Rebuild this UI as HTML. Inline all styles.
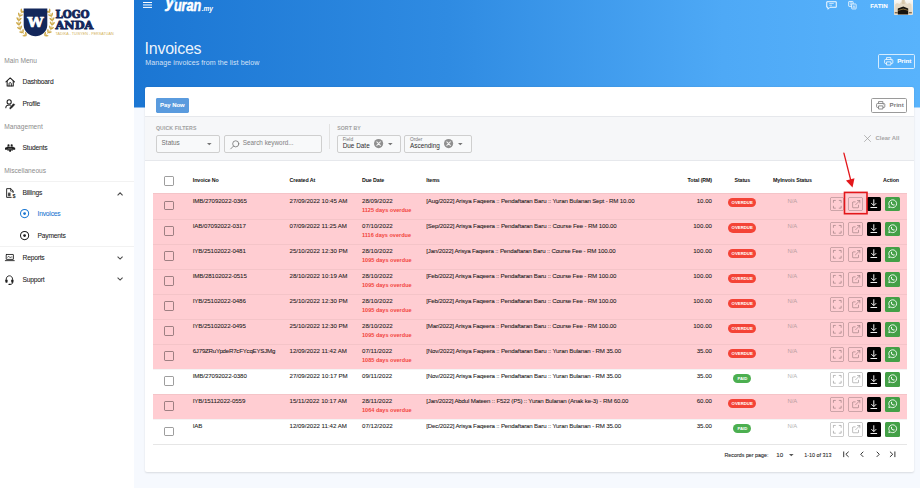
<!DOCTYPE html>
<html lang="en"><head><meta charset="utf-8"><title>Invoices</title>
<style>
html,body{margin:0;padding:0}
body{width:920px;height:488px;overflow:hidden;position:relative;background:#f6f9fe;font-family:"Liberation Sans",sans-serif;}
.t{position:absolute;line-height:1;white-space:nowrap;-webkit-text-stroke:.07px currentColor}
.nb{-webkit-text-stroke:0}
.abs{position:absolute}
#hdr{left:134px;top:0;width:786px;height:107px;background:linear-gradient(90deg,#1b76d3 0%,#2f8be2 40%,#4ea9f6 75%,#58b3fc 100%);}
#side{left:0;top:0;width:134px;height:488px;background:#fff;}
#card{left:145px;top:87px;width:769px;height:385.3px;background:#fff;border-radius:2px;box-shadow:0 0.5px 2px rgba(0,0,0,.12);}
#fbar{left:145px;top:116px;width:769px;height:44.6px;background:#f6f7f9;border-top:.5px solid #e6e8ec;border-bottom:.5px solid #e6e8ec;box-sizing:border-box}
.row{position:absolute;left:152.7px;width:754.1px;height:25px;box-sizing:border-box;border-top:.6px solid rgba(0,0,0,.045)}
.pink{background:#ffcdd2}
.cb{position:absolute;width:9.5px;height:9.5px;box-sizing:border-box;border:1px solid rgba(0,0,0,.38);border-radius:1.4px;background:transparent}
.sel{position:absolute;box-sizing:border-box;border:.8px solid #cfcfcf;border-radius:2px;background:#f8f9fa;height:18.3px;top:135.1px}
.badge{position:absolute;height:9.2px;border-radius:5px;color:#fff;font-weight:bold;font-size:4.3px;line-height:9.4px;text-align:center}
.btn{position:absolute;width:14.4px;height:14.8px;box-sizing:border-box;border-radius:1.5px}
.ob{border:.8px solid rgba(0,0,0,.2)}
svg{position:absolute;overflow:visible}
</style></head><body>

<div id="hdr" class="abs"></div>
<div class="abs" style="left:134px;top:107px;width:786px;height:1px;opacity:.5;background:linear-gradient(90deg,#1b76d3 0%,#2f8be2 40%,#4ea9f6 75%,#58b3fc 100%)"></div>
<div id="side" class="abs"></div>
<div id="card" class="abs"></div>
<div id="fbar" class="abs"></div>
<svg id="logo" style="left:15px;top:6px" width="104" height="34" viewBox="0 0 104 34">
<g fill="none" stroke="#cda94a" stroke-width=".55" stroke-linecap="round">
<path d="M7.8 4.8 C1.6 11 1.6 24 11 29.5"/><path d="M33.2 4.8 C39.4 11 39.4 24 30 29.5"/>
</g>
<g fill="#cda94a"><ellipse cx="6.32" cy="4.42" rx="0.8" ry="2" transform="rotate(0 6.32 4.42)"/><ellipse cx="8.21" cy="5.90" rx="0.8" ry="2" transform="rotate(76 8.21 5.90)"/><ellipse cx="3.93" cy="8.47" rx="0.8" ry="2" transform="rotate(-15 3.93 8.47)"/><ellipse cx="6.14" cy="9.40" rx="0.8" ry="2" transform="rotate(61 6.14 9.40)"/><ellipse cx="2.68" cy="12.99" rx="0.8" ry="2" transform="rotate(-30 2.68 12.99)"/><ellipse cx="5.05" cy="13.33" rx="0.8" ry="2" transform="rotate(46 5.05 13.33)"/><ellipse cx="2.63" cy="17.69" rx="0.8" ry="2" transform="rotate(-45 2.63 17.69)"/><ellipse cx="5.02" cy="17.40" rx="0.8" ry="2" transform="rotate(31 5.02 17.40)"/><ellipse cx="3.81" cy="22.24" rx="0.8" ry="2" transform="rotate(-60 3.81 22.24)"/><ellipse cx="6.04" cy="21.34" rx="0.8" ry="2" transform="rotate(16 6.04 21.34)"/><ellipse cx="6.12" cy="26.33" rx="0.8" ry="2" transform="rotate(-75 6.12 26.33)"/><ellipse cx="8.04" cy="24.89" rx="0.8" ry="2" transform="rotate(1 8.04 24.89)"/><ellipse cx="9.42" cy="29.68" rx="0.8" ry="2" transform="rotate(-90 9.42 29.68)"/><ellipse cx="10.90" cy="27.79" rx="0.8" ry="2" transform="rotate(-14 10.90 27.79)"/><ellipse cx="34.68" cy="4.42" rx="0.8" ry="2" transform="rotate(0 34.68 4.42)"/><ellipse cx="32.79" cy="5.90" rx="0.8" ry="2" transform="rotate(-76 32.79 5.90)"/><ellipse cx="37.07" cy="8.47" rx="0.8" ry="2" transform="rotate(15 37.07 8.47)"/><ellipse cx="34.86" cy="9.40" rx="0.8" ry="2" transform="rotate(-61 34.86 9.40)"/><ellipse cx="38.32" cy="12.99" rx="0.8" ry="2" transform="rotate(30 38.32 12.99)"/><ellipse cx="35.95" cy="13.33" rx="0.8" ry="2" transform="rotate(-46 35.95 13.33)"/><ellipse cx="38.37" cy="17.69" rx="0.8" ry="2" transform="rotate(45 38.37 17.69)"/><ellipse cx="35.98" cy="17.40" rx="0.8" ry="2" transform="rotate(-31 35.98 17.40)"/><ellipse cx="37.19" cy="22.24" rx="0.8" ry="2" transform="rotate(60 37.19 22.24)"/><ellipse cx="34.96" cy="21.34" rx="0.8" ry="2" transform="rotate(-16 34.96 21.34)"/><ellipse cx="34.88" cy="26.33" rx="0.8" ry="2" transform="rotate(75 34.88 26.33)"/><ellipse cx="32.96" cy="24.89" rx="0.8" ry="2" transform="rotate(-1 32.96 24.89)"/><ellipse cx="31.58" cy="29.68" rx="0.8" ry="2" transform="rotate(90 31.58 29.68)"/><ellipse cx="30.10" cy="27.79" rx="0.8" ry="2" transform="rotate(14 30.10 27.79)"/></g>
<path d="M8.7 2.6 H32.3 V19 C32.3 26 26 30.2 20.5 30.2 C15 30.2 8.7 26 8.7 19 Z" fill="#13275b"/>
<text x="20.5" y="21.4" text-anchor="middle" font-family="DejaVu Serif, serif" font-weight="bold" font-size="12.5" fill="#fff" stroke="#fff" stroke-width=".7" textLength="16" lengthAdjust="spacingAndGlyphs">W</text>
<text x="40.6" y="11.5" font-family="DejaVu Serif, serif" font-weight="bold" font-size="10.8" fill="#13275b" stroke="#13275b" stroke-width=".9" textLength="34" lengthAdjust="spacingAndGlyphs">LOGO</text>
<text x="40.6" y="22.5" font-family="DejaVu Serif, serif" font-weight="bold" font-size="10.8" fill="#13275b" stroke="#13275b" stroke-width=".9" textLength="37.6" lengthAdjust="spacingAndGlyphs">ANDA</text>
<text x="40.6" y="28.9" font-family="Liberation Sans, sans-serif" font-size="3.2" fill="#d3b25a" textLength="58" lengthAdjust="spacingAndGlyphs">TADIKA - TUISYEN - PERSATUAN</text>
</svg>
<div class="t" id="s0" style="top:57.87px;font-size:6.6px;color:#8c8c8c;left:4.30px;-webkit-text-stroke:0;">Main Menu</div>
<div class="t" id="s1" style="top:78.82px;font-size:6.7px;color:#1d1d1d;letter-spacing:-0.2px;left:22.50px;">Dashboard</div>
<div class="t" id="s2" style="top:100.62px;font-size:6.7px;color:#1d1d1d;letter-spacing:-0.2px;left:22.50px;">Profile</div>
<div class="t" id="s3" style="top:123.57px;font-size:6.6px;color:#8c8c8c;left:4.30px;-webkit-text-stroke:0;">Management</div>
<div class="t" id="s4" style="top:144.82px;font-size:6.7px;color:#1d1d1d;letter-spacing:-0.2px;left:22.50px;">Students</div>
<div class="t" id="s5" style="top:167.57px;font-size:6.6px;color:#8c8c8c;left:4.30px;-webkit-text-stroke:0;">Miscellaneous</div>
<div class="abs" style="left:0;top:181.2px;width:134px;height:.7px;background:#f2f2f2"></div>
<div class="t" id="s6" style="top:190.12px;font-size:6.7px;color:#1d1d1d;letter-spacing:-0.2px;left:22.50px;">Billings</div>
<div class="t" id="s7" style="top:210.92px;font-size:6.7px;color:#1976d2;letter-spacing:-0.2px;left:37.50px;">Invoices</div>
<div class="t" id="s8" style="top:232.72px;font-size:6.7px;color:#1d1d1d;letter-spacing:-0.2px;left:37.50px;">Payments</div>
<div class="abs" style="left:0;top:245.8px;width:134px;height:.7px;background:#f2f2f2"></div>
<div class="t" id="s9" style="top:254.52px;font-size:6.7px;color:#1d1d1d;letter-spacing:-0.2px;left:22.50px;">Reports</div>
<div class="t" id="s10" style="top:277.12px;font-size:6.7px;color:#1d1d1d;letter-spacing:-0.2px;left:22.50px;">Support</div>
<svg style="left:4.70px;top:77.00px" width="10.4" height="10.2" viewBox="0 0 24 24" ><g fill="none" stroke="#1d1d1d" stroke-width="2.5" stroke-linejoin="round" stroke-linecap="round"><path d="M2 11.5 L12 2.2 L22 11.5"/><path d="M4.8 10 V21.3 H19.2 V10"/><path d="M9.3 21 V15.5 C9.3 12.5 14.7 12.5 14.7 15.5 V21" stroke-width="2.2"/></g></svg>
<svg style="left:4.90px;top:98.60px" width="10" height="10.2" viewBox="0 0 24 24" ><g fill="none" stroke="#1d1d1d" stroke-width="2.5" stroke-linecap="round"><circle cx="10" cy="6.8" r="5"/><path d="M2 21 C2 16 5.5 14.2 10 14.2 C11.2 14.2 12 14.3 13 14.6"/><path d="M12 22.6 L12.6 19.6 L20.6 11.2 L23 13.6 L15 22 Z" stroke-width="2" stroke-linejoin="round" fill="#1d1d1d"/></g></svg>
<svg style="left:4.90px;top:143.90px" width="10.2" height="8" viewBox="0 0 102 80" ><g fill="#1d1d1d"><circle cx="35" cy="13" r="11"/><circle cx="67" cy="13" r="11"/><path d="M22 24 H46 L51 34 L56 24 H80 L92 40 H10 Z"/><rect x="0" y="36" width="102" height="22" rx="3"/><path d="M22 58 H80 V66 H60 V78 H42 V66 H22 Z"/></g><path d="M30 47 H72" stroke="#fff" stroke-width="5" opacity=".55"/></svg>
<svg style="left:5.50px;top:187.80px" width="10" height="10" viewBox="0 0 24 24" ><g fill="none" stroke="#1d1d1d" stroke-width="2.2" stroke-linejoin="round" stroke-linecap="round"><path d="M12.5 22.5 H1.5 V1.5 H11.5 L17 7 V11"/><path d="M11 1.5 V7.5 H17" stroke-width="1.8"/></g><g stroke="#1d1d1d" stroke-width="1.6"><path d="M4.5 12.5 H11 M4.5 15.5 H11 M4.5 18.5 H11 M6.7 11.5 V19.5 M9 11.5 V19.5"/></g><text x="19.4" y="23.5" text-anchor="middle" font-family="Liberation Sans, sans-serif" font-weight="bold" font-size="13" fill="#1d1d1d">$</text></svg>
<svg style="left:19.90px;top:209.40px" width="9.2" height="9.2" viewBox="0 0 18 18" ><circle cx="9" cy="9" r="8" fill="none" stroke="#1976d2" stroke-width="2"/><circle cx="9" cy="9" r="2.7" fill="#1976d2"/></svg>
<svg style="left:19.90px;top:231.20px" width="9.2" height="9.2" viewBox="0 0 18 18" ><circle cx="9" cy="9" r="8" fill="none" stroke="#1d1d1d" stroke-width="2"/><circle cx="9" cy="9" r="2.7" fill="#1d1d1d"/></svg>
<svg style="left:5.40px;top:254.20px" width="9.6" height="7.2" viewBox="0 0 24 18" ><g fill="none" stroke="#1d1d1d" stroke-width="2.2" stroke-linejoin="round" stroke-linecap="round"><rect x="3" y="1.2" width="18" height="12.3" rx="0.6"/><path d="M0.8 16.6 H23.2"/><path d="M6.5 8 L9.5 5.5 L12.5 9.5 L15 7.5 H17.5" stroke-width="1.7"/></g></svg>
<svg style="left:5.40px;top:274.50px" width="8.8" height="10.4" viewBox="0 0 22 26" ><g fill="none" stroke="#1d1d1d" stroke-width="2.3" stroke-linecap="round" stroke-linejoin="round"><path d="M3 15 V11 C3 5.5 6.5 2 11 2 C15.5 2 19 5.5 19 11 V15"/><path d="M19 16 V19 C19 22 17 23.5 13 23.5"/></g><g fill="#1d1d1d"><rect x="1" y="11" width="5.4" height="8.6" rx="2"/><rect x="15.6" y="11" width="5.4" height="8.6" rx="2"/><rect x="8.6" y="21.8" width="5" height="3.4" rx="1.5"/></g></svg>
<svg style="left:117.40px;top:191.70px" width="6.2" height="3.9" viewBox="0 0 11 7" ><path d="M1 6 L5.5 1.4 L10 6" fill="none" stroke="#4a4a4a" stroke-width="1.9"/></svg>
<svg style="left:117.40px;top:255.90px" width="6.2" height="3.9" viewBox="0 0 11 7" ><path d="M1 1 L5.5 5.6 L10 1" fill="none" stroke="#4a4a4a" stroke-width="1.9"/></svg>
<svg style="left:117.40px;top:277.20px" width="6.2" height="3.9" viewBox="0 0 11 7" ><path d="M1 1 L5.5 5.6 L10 1" fill="none" stroke="#4a4a4a" stroke-width="1.9"/></svg>
<svg style="left:826.00px;top:1.00px" width="11" height="9" viewBox="0 0 22 18" ><g fill="none" stroke="#fff" stroke-width="1.9" stroke-linejoin="round"><path d="M1.5 1.5 H20.5 V12.5 H8 L4 16.5 V12.5 H1.5 Z"/></g><path d="M6.5 5 H15.5 M6.5 8.5 H12" stroke="#fff" stroke-width="1.5" opacity=".8"/></svg>
<svg style="left:848.10px;top:0.70px" width="8.8" height="8.4" viewBox="0 0 18 18" ><g fill="none" stroke="#fff" stroke-width="1.7" stroke-linejoin="round"><rect x="1" y="1" width="9.5" height="10.5" rx="1"/><rect x="7.5" y="6.5" width="9.5" height="10.5" rx="1" fill="#50acf8"/></g><path d="M3.5 4 H8 M5.8 3 V4 M4 8.5 C6 7.5 7 6 7.3 4 M4.2 5.5 C5 7 6 8 7.8 8.6" stroke="#fff" stroke-width="1" fill="none"/><path d="M10 15 L12.3 9.5 L14.6 15 M10.8 13.3 H13.8" stroke="#fff" stroke-width="1.1" fill="none"/></svg>
<svg style="left:883.80px;top:57.20px" width="9.4" height="8.6" viewBox="0 0 24 22" ><g fill="none" stroke="#fff" stroke-width="2" stroke-linejoin="round"><path d="M6.5 6 V1.5 H17.5 V6"/><path d="M6 16.5 H3.5 C2.3 16.5 1.5 15.7 1.5 14.5 V8.5 C1.5 7.3 2.3 6.5 3.5 6.5 H20.5 C21.7 6.5 22.5 7.3 22.5 8.5 V14.5 C22.5 15.7 21.7 16.5 20.5 16.5 H18"/><path d="M6.5 12.5 H17.5 V20.5 H6.5 Z"/></g><circle cx="18.6" cy="9.6" r="1.1" fill="#fff"/></svg>
<svg style="left:876.20px;top:101.40px" width="9.4" height="8.6" viewBox="0 0 24 22" ><g fill="none" stroke="#707070" stroke-width="2" stroke-linejoin="round"><path d="M6.5 6 V1.5 H17.5 V6"/><path d="M6 16.5 H3.5 C2.3 16.5 1.5 15.7 1.5 14.5 V8.5 C1.5 7.3 2.3 6.5 3.5 6.5 H20.5 C21.7 6.5 22.5 7.3 22.5 8.5 V14.5 C22.5 15.7 21.7 16.5 20.5 16.5 H18"/><path d="M6.5 12.5 H17.5 V20.5 H6.5 Z"/></g><circle cx="18.6" cy="9.6" r="1.1" fill="#707070"/></svg>
<div class="abs" style="left:143px;top:2px;width:8.8px;height:1.1px;background:#fff;box-shadow:0 2.45px 0 #fff,0 4.9px 0 #fff"></div>
<svg id="yuran" style="left:160px;top:0" width="60" height="14" viewBox="0 0 60 14"><text font-family="Liberation Sans, sans-serif" font-weight="bold" font-style="italic" font-size="16.6" fill="#fff" stroke="#fff" stroke-width=".55"><tspan x="5.6" y="7.6" textLength="8.6" lengthAdjust="spacingAndGlyphs">y</tspan><tspan x="13.9" y="10.9" textLength="27.4" lengthAdjust="spacingAndGlyphs">uran</tspan></text><text x="41.7" y="10.7" font-family="Liberation Sans, sans-serif" font-style="italic" font-weight="bold" font-size="7" fill="#fff" textLength="11.2" lengthAdjust="spacingAndGlyphs">.my</text><path d="M12.8 0 H16.2 V1.2 C16.2 1.9 15.6 2.3 15 2.1 L12.8 1.4 Z" fill="#63c3ff"/></svg>
<div class="t" id="h1" style="top:40.68px;font-size:16px;color:rgba(255,255,255,.93);letter-spacing:-0.25px;left:144.60px;-webkit-text-stroke:0;">Invoices</div>
<div class="t" id="h2" style="top:60.21px;font-size:7.1px;color:rgba(255,255,255,.8);letter-spacing:0.05px;left:145.30px;-webkit-text-stroke:0;">Manage invoices from the list below</div>
<div class="t" id="fatin" style="top:3.28px;font-size:6.2px;color:#fff;font-weight:bold;left:870.20px;">FATIN</div>
<div class="abs" id="avatar" style="left:894.2px;top:-2px;width:18.7px;height:16.6px;border-radius:1.6px;overflow:hidden;background:#fbfaf8">
<svg style="left:0;top:0" width="18.7" height="16.6" viewBox="0 0 18.7 16.6">
<defs><linearGradient id="avg" x1="0" y1="0" x2="0" y2="1"><stop offset="0" stop-color="#ffffff"/><stop offset=".45" stop-color="#f1ebe0"/><stop offset="1" stop-color="#e3d6c0"/></linearGradient></defs>
<rect width="18.7" height="16.6" fill="url(#avg)"/>
<path d="M1.2 16.6 V6.4 L3 5 L5.6 6 L7.4 3.4 L8.2 0 H10.4 L11.2 3.4 L13 6 L15.6 5 L17.4 6.4 V16.6 Z" fill="#e6dac6"/>
<path d="M8.4 0 H10.2 L10.8 6 H7.8 Z" fill="#d9c8ab"/>
<path d="M3.8 16.6 V10.6 L9.3 8.4 L14.2 10.6 V16.6 Z" fill="#17130e"/>
<path d="M4.2 12 L9.3 10.6 L14 12 V12.8 L9.3 11.5 L4.2 12.8 Z" fill="#8f7440"/>
<rect x="0.8" y="14" width="3" height="1.4" fill="#6a5238" opacity=".8"/><rect x="14.8" y="14" width="3" height="1.4" fill="#6a5238" opacity=".8"/>
</svg></div>
<div class="abs" id="hprint" style="left:878.4px;top:54.2px;width:36.2px;height:14.6px;box-sizing:border-box;border:.8px solid rgba(255,255,255,.75);border-radius:1.6px"></div>
<div class="t" id="hprintt" style="top:58.38px;font-size:6.2px;color:#fff;font-weight:bold;left:897.20px;">Print</div>
<div class="abs" id="paynow" style="left:156px;top:98.4px;width:32.8px;height:14.6px;background:#5a9bde;border-radius:1.4px"></div>
<div class="t" id="paynowt" style="top:103.23px;font-size:5.9px;color:#fff;font-weight:bold;left:72.40px;width:200px;text-align:center;">Pay Now</div>
<div class="abs" id="cprint" style="left:871px;top:98.4px;width:36px;height:14.6px;box-sizing:border-box;border:.8px solid #9a9a9a;border-radius:1.6px"></div>
<div class="t" id="cprintt" style="top:102.38px;font-size:6.2px;color:#7a7a7a;font-weight:bold;left:889.60px;-webkit-text-stroke:0;">Print</div>
<div class="t" id="qf" style="top:126.10px;font-size:5.2px;color:#a0a0a0;font-weight:bold;letter-spacing:0.08px;left:156.00px;-webkit-text-stroke:0;">QUICK FILTERS</div>
<div class="sel" style="left:156px;width:64.2px"></div>
<div class="t" id="status" style="top:140.27px;font-size:6.4px;color:#707070;left:161.60px;-webkit-text-stroke:0;">Status</div>
<div class="sel" style="left:223.6px;width:98.8px"></div>
<div class="t" id="search" style="top:140.10px;font-size:6.35px;color:#808080;left:242.80px;-webkit-text-stroke:0;">Search keyword...</div>
<div class="abs" style="left:329.1px;top:124.4px;width:.6px;height:25px;background:#e2e2e2"></div>
<div class="t" id="sortby" style="top:126.10px;font-size:5.2px;color:#a0a0a0;font-weight:bold;letter-spacing:0.08px;left:337.20px;-webkit-text-stroke:0;">SORT BY</div>
<div class="sel" style="left:337.2px;width:63.4px"></div>
<div class="t" id="field" style="top:137.50px;font-size:4.8px;color:#777;left:342.70px;-webkit-text-stroke:0;">Field</div>
<div class="t" id="duedate" style="top:143.47px;font-size:6.4px;color:#2e2e2e;left:342.70px;-webkit-text-stroke:0;">Due Date</div>
<div class="sel" style="left:404.3px;width:67.6px"></div>
<div class="t" id="order" style="top:137.50px;font-size:4.8px;color:#777;left:410.00px;-webkit-text-stroke:0;">Order</div>
<div class="t" id="asc" style="top:143.47px;font-size:6.4px;color:#2e2e2e;left:410.00px;-webkit-text-stroke:0;">Ascending</div>
<div class="t" id="clearall" style="top:136.13px;font-size:5.9px;color:#a6a6a6;font-weight:bold;left:875.60px;-webkit-text-stroke:0;">Clear All</div>
<svg style="left:207.00px;top:143.40px" width="4.6" height="2.4" viewBox="0 0 10 5" ><path d="M0 0 H10 L5 5 Z" fill="#757575"/></svg>
<svg style="left:230.20px;top:139.60px" width="9.6" height="9.6" viewBox="0 0 20 20" ><g fill="none" stroke="#757575" stroke-width="1.7" stroke-linecap="round"><circle cx="12" cy="8" r="6.4"/><path d="M7.3 12.7 L1.5 18.5"/></g></svg>
<svg style="left:373.75px;top:139.40px" width="9.2" height="9.2" viewBox="0 0 20 20" ><circle cx="10" cy="10" r="10" fill="#8f8f8f"/><path d="M6.2 6.2 L13.8 13.8 M13.8 6.2 L6.2 13.8" stroke="#f4f4f4" stroke-width="2.2" stroke-linecap="round"/></svg>
<svg style="left:388.00px;top:143.40px" width="4.6" height="2.4" viewBox="0 0 10 5" ><path d="M0 0 H10 L5 5 Z" fill="#757575"/></svg>
<svg style="left:444.10px;top:139.40px" width="9.2" height="9.2" viewBox="0 0 20 20" ><circle cx="10" cy="10" r="10" fill="#8f8f8f"/><path d="M6.2 6.2 L13.8 13.8 M13.8 6.2 L6.2 13.8" stroke="#f4f4f4" stroke-width="2.2" stroke-linecap="round"/></svg>
<svg style="left:458.40px;top:143.40px" width="4.6" height="2.4" viewBox="0 0 10 5" ><path d="M0 0 H10 L5 5 Z" fill="#757575"/></svg>
<svg style="left:863.80px;top:135.00px" width="7" height="7" viewBox="0 0 14 14" ><path d="M1 1 L13 13 M13 1 L1 13" stroke="#9a9a9a" stroke-width="1.4" stroke-linecap="round"/></svg>
<div class="cb" style="left:164.1px;top:176.2px"></div>
<div class="t" id="th1" style="top:177.84px;font-size:5.3px;color:#111;font-weight:bold;letter-spacing:-0.1px;left:192.80px;-webkit-text-stroke:0;">Invoice No</div>
<div class="t" id="th2" style="top:177.84px;font-size:5.3px;color:#111;font-weight:bold;letter-spacing:-0.1px;left:289.50px;-webkit-text-stroke:0;">Created At</div>
<div class="t" id="th3" style="top:177.84px;font-size:5.3px;color:#111;font-weight:bold;letter-spacing:-0.1px;left:362.00px;-webkit-text-stroke:0;">Due Date</div>
<div class="t" id="th4" style="top:177.84px;font-size:5.3px;color:#111;font-weight:bold;letter-spacing:-0.1px;left:426.30px;-webkit-text-stroke:0;">Items</div>
<div class="t" id="th5" style="top:177.84px;font-size:5.3px;color:#111;font-weight:bold;letter-spacing:-0.1px;right:208.00px;-webkit-text-stroke:0;">Total (RM)</div>
<div class="t" id="th6" style="top:177.84px;font-size:5.3px;color:#111;font-weight:bold;letter-spacing:-0.1px;left:642.30px;width:200px;text-align:center;-webkit-text-stroke:0;">Status</div>
<div class="t" id="th7" style="top:177.84px;font-size:5.3px;color:#111;font-weight:bold;letter-spacing:-0.1px;left:692.40px;width:200px;text-align:center;-webkit-text-stroke:0;">MyInvois Status</div>
<div class="t" id="th8" style="top:177.84px;font-size:5.3px;color:#111;font-weight:bold;letter-spacing:-0.1px;right:21.00px;-webkit-text-stroke:0;">Action</div>
<div class="row pink" style="top:193px;height:26px"></div>
<div class="cb" style="left:164.1px;top:200.9px"></div>
<div class="t" id="r0a" style="top:198.00px;font-size:6.15px;color:#1a1a1a;letter-spacing:-0.094px;left:192.70px;">IMB/27092022-0365</div>
<div class="t" id="r0b" style="top:198.00px;font-size:6.15px;color:#1a1a1a;letter-spacing:-0.03px;left:289.50px;">27/09/2022 10:45 AM</div>
<div class="t" id="r0c" style="top:198.00px;font-size:6.15px;color:#1a1a1a;left:362.00px;">28/09/2022</div>
<div class="t" id="r0d" style="top:207.51px;font-size:5.55px;color:#f2453d;font-weight:bold;left:362.00px;-webkit-text-stroke:0;">1125 days overdue</div>
<div class="t" id="r0e" style="top:198.00px;font-size:6.15px;color:#1a1a1a;letter-spacing:-0.165px;left:426.20px;">[Aug/2022] Arisya Faqeera :: Pendaftaran Baru :: Yuran Bulanan Sept - RM 10.00</div>
<div class="t" id="r0f" style="top:198.00px;font-size:6.15px;color:#1a1a1a;right:208.00px;">10.00</div>
<div class="badge" style="left:728.2px;top:198.3px;width:28px;background:#f44336">OVERDUE</div>
<div class="t" id="r0g" style="top:198.73px;font-size:5.9px;color:#b99da1;left:692.30px;width:200px;text-align:center;-webkit-text-stroke:0;">N/A</div>
<div class="btn ob" style="left:830px;top:196.6px"></div>
<div class="btn ob" style="left:848.4px;top:196.6px"></div>
<div class="btn" style="left:866.8px;top:196.6px;background:#000"></div>
<div class="btn" style="left:885.2px;top:196.6px;background:#43a047"></div>
<svg style="left:833.20px;top:199.75px" width="8.6" height="8.6" viewBox="0 0 20 20" ><path d="M1 6.5 V1 H6.5 M13.5 1 H19 V6.5 M19 13.5 V19 H13.5 M6.5 19 H1 V13.5" fill="none" stroke="rgba(0,0,0,.36)" stroke-width="1.7"/></svg>
<svg style="left:851.70px;top:199.75px" width="8.4" height="8.4" viewBox="0 0 20 20" ><g fill="none" stroke="rgba(0,0,0,.36)" stroke-width="1.7" stroke-linejoin="round"><path d="M15.5 11.5 V17 C15.5 18 15 18.5 14 18.5 H3 C2 18.5 1.5 18 1.5 17 V6 C1.5 5 2 4.5 3 4.5 H8.5"/><path d="M8 12 L18.5 1.5 M12 1.3 H18.7 V8"/></g></svg>
<svg style="left:870.20px;top:199.15px" width="7.6" height="9.6" viewBox="0 0 16 20" ><path d="M8 0.5 V13.5 M2.8 8.6 L8 13.8 L13.2 8.6" fill="none" stroke="#fff" stroke-width="2"/><path d="M1 17.8 H15" stroke="#fff" stroke-width="2"/></svg>
<svg style="left:887.80px;top:198.85px" width="9.4" height="9.4" viewBox="0 0 24 24" ><path d="M12 2 C6.5 2 2 6.5 2 12 C2 13.9 2.5 15.6 3.4 17.1 L2 22 L7.1 20.7 C8.5 21.5 10.2 22 12 22 C17.5 22 22 17.5 22 12 C22 6.5 17.5 2 12 2 Z" fill="none" stroke="#fff" stroke-width="2.2" stroke-linejoin="round"/><path d="M8.3 6.9 C7.6 7.4 7.2 8.3 7.3 9.3 C7.6 12.6 11.3 16.4 14.8 16.8 C15.8 16.9 16.7 16.4 17.2 15.6 L17.3 14.6 L14.8 13.3 L13.7 14.4 C12.2 13.8 10.4 12 9.7 10.4 L10.8 9.2 L9.5 6.8 Z" fill="#fff"/></svg>
<div class="row pink" style="top:219px;height:25px"></div>
<div class="cb" style="left:164.1px;top:226.0px"></div>
<div class="t" id="r1a" style="top:223.00px;font-size:6.15px;color:#1a1a1a;letter-spacing:-0.094px;left:192.70px;">IAB/07092022-0317</div>
<div class="t" id="r1b" style="top:223.00px;font-size:6.15px;color:#1a1a1a;letter-spacing:-0.03px;left:289.50px;">07/09/2022 11:25 AM</div>
<div class="t" id="r1c" style="top:223.00px;font-size:6.15px;color:#1a1a1a;left:362.00px;">07/10/2022</div>
<div class="t" id="r1d" style="top:232.51px;font-size:5.55px;color:#f2453d;font-weight:bold;left:362.00px;-webkit-text-stroke:0;">1116 days overdue</div>
<div class="t" id="r1e" style="top:223.00px;font-size:6.15px;color:#1a1a1a;letter-spacing:-0.165px;left:426.20px;">[Sep/2022] Arisya Faqeera :: Pendaftaran Baru :: Course Fee - RM 100.00</div>
<div class="t" id="r1f" style="top:223.00px;font-size:6.15px;color:#1a1a1a;right:208.00px;">100.00</div>
<div class="badge" style="left:728.2px;top:223.4px;width:28px;background:#f44336">OVERDUE</div>
<div class="t" id="r1g" style="top:223.73px;font-size:5.9px;color:#b99da1;left:692.30px;width:200px;text-align:center;-webkit-text-stroke:0;">N/A</div>
<div class="btn ob" style="left:830px;top:221.7px"></div>
<div class="btn ob" style="left:848.4px;top:221.7px"></div>
<div class="btn" style="left:866.8px;top:221.7px;background:#000"></div>
<div class="btn" style="left:885.2px;top:221.7px;background:#43a047"></div>
<svg style="left:833.20px;top:224.81px" width="8.6" height="8.6" viewBox="0 0 20 20" ><path d="M1 6.5 V1 H6.5 M13.5 1 H19 V6.5 M19 13.5 V19 H13.5 M6.5 19 H1 V13.5" fill="none" stroke="rgba(0,0,0,.36)" stroke-width="1.7"/></svg>
<svg style="left:851.70px;top:224.81px" width="8.4" height="8.4" viewBox="0 0 20 20" ><g fill="none" stroke="rgba(0,0,0,.36)" stroke-width="1.7" stroke-linejoin="round"><path d="M15.5 11.5 V17 C15.5 18 15 18.5 14 18.5 H3 C2 18.5 1.5 18 1.5 17 V6 C1.5 5 2 4.5 3 4.5 H8.5"/><path d="M8 12 L18.5 1.5 M12 1.3 H18.7 V8"/></g></svg>
<svg style="left:870.20px;top:224.21px" width="7.6" height="9.6" viewBox="0 0 16 20" ><path d="M8 0.5 V13.5 M2.8 8.6 L8 13.8 L13.2 8.6" fill="none" stroke="#fff" stroke-width="2"/><path d="M1 17.8 H15" stroke="#fff" stroke-width="2"/></svg>
<svg style="left:887.80px;top:223.91px" width="9.4" height="9.4" viewBox="0 0 24 24" ><path d="M12 2 C6.5 2 2 6.5 2 12 C2 13.9 2.5 15.6 3.4 17.1 L2 22 L7.1 20.7 C8.5 21.5 10.2 22 12 22 C17.5 22 22 17.5 22 12 C22 6.5 17.5 2 12 2 Z" fill="none" stroke="#fff" stroke-width="2.2" stroke-linejoin="round"/><path d="M8.3 6.9 C7.6 7.4 7.2 8.3 7.3 9.3 C7.6 12.6 11.3 16.4 14.8 16.8 C15.8 16.9 16.7 16.4 17.2 15.6 L17.3 14.6 L14.8 13.3 L13.7 14.4 C12.2 13.8 10.4 12 9.7 10.4 L10.8 9.2 L9.5 6.8 Z" fill="#fff"/></svg>
<div class="row pink" style="top:244px;height:25px"></div>
<div class="cb" style="left:164.1px;top:251.1px"></div>
<div class="t" id="r2a" style="top:248.00px;font-size:6.15px;color:#1a1a1a;letter-spacing:-0.094px;left:192.70px;">IYB/25102022-0481</div>
<div class="t" id="r2b" style="top:248.00px;font-size:6.15px;color:#1a1a1a;letter-spacing:-0.03px;left:289.50px;">25/10/2022 12:30 PM</div>
<div class="t" id="r2c" style="top:248.00px;font-size:6.15px;color:#1a1a1a;left:362.00px;">28/10/2022</div>
<div class="t" id="r2d" style="top:257.51px;font-size:5.55px;color:#f2453d;font-weight:bold;left:362.00px;-webkit-text-stroke:0;">1095 days overdue</div>
<div class="t" id="r2e" style="top:248.00px;font-size:6.15px;color:#1a1a1a;letter-spacing:-0.165px;left:426.20px;">[Jan/2022] Arisya Faqeera :: Pendaftaran Baru :: Course Fee - RM 100.00</div>
<div class="t" id="r2f" style="top:248.00px;font-size:6.15px;color:#1a1a1a;right:208.00px;">100.00</div>
<div class="badge" style="left:728.2px;top:248.5px;width:28px;background:#f44336">OVERDUE</div>
<div class="t" id="r2g" style="top:248.73px;font-size:5.9px;color:#b99da1;left:692.30px;width:200px;text-align:center;-webkit-text-stroke:0;">N/A</div>
<div class="btn ob" style="left:830px;top:246.8px"></div>
<div class="btn ob" style="left:848.4px;top:246.8px"></div>
<div class="btn" style="left:866.8px;top:246.8px;background:#000"></div>
<div class="btn" style="left:885.2px;top:246.8px;background:#43a047"></div>
<svg style="left:833.20px;top:249.87px" width="8.6" height="8.6" viewBox="0 0 20 20" ><path d="M1 6.5 V1 H6.5 M13.5 1 H19 V6.5 M19 13.5 V19 H13.5 M6.5 19 H1 V13.5" fill="none" stroke="rgba(0,0,0,.36)" stroke-width="1.7"/></svg>
<svg style="left:851.70px;top:249.87px" width="8.4" height="8.4" viewBox="0 0 20 20" ><g fill="none" stroke="rgba(0,0,0,.36)" stroke-width="1.7" stroke-linejoin="round"><path d="M15.5 11.5 V17 C15.5 18 15 18.5 14 18.5 H3 C2 18.5 1.5 18 1.5 17 V6 C1.5 5 2 4.5 3 4.5 H8.5"/><path d="M8 12 L18.5 1.5 M12 1.3 H18.7 V8"/></g></svg>
<svg style="left:870.20px;top:249.27px" width="7.6" height="9.6" viewBox="0 0 16 20" ><path d="M8 0.5 V13.5 M2.8 8.6 L8 13.8 L13.2 8.6" fill="none" stroke="#fff" stroke-width="2"/><path d="M1 17.8 H15" stroke="#fff" stroke-width="2"/></svg>
<svg style="left:887.80px;top:248.97px" width="9.4" height="9.4" viewBox="0 0 24 24" ><path d="M12 2 C6.5 2 2 6.5 2 12 C2 13.9 2.5 15.6 3.4 17.1 L2 22 L7.1 20.7 C8.5 21.5 10.2 22 12 22 C17.5 22 22 17.5 22 12 C22 6.5 17.5 2 12 2 Z" fill="none" stroke="#fff" stroke-width="2.2" stroke-linejoin="round"/><path d="M8.3 6.9 C7.6 7.4 7.2 8.3 7.3 9.3 C7.6 12.6 11.3 16.4 14.8 16.8 C15.8 16.9 16.7 16.4 17.2 15.6 L17.3 14.6 L14.8 13.3 L13.7 14.4 C12.2 13.8 10.4 12 9.7 10.4 L10.8 9.2 L9.5 6.8 Z" fill="#fff"/></svg>
<div class="row pink" style="top:269px;height:25px"></div>
<div class="cb" style="left:164.1px;top:276.1px"></div>
<div class="t" id="r3a" style="top:273.00px;font-size:6.15px;color:#1a1a1a;letter-spacing:-0.094px;left:192.70px;">IMB/28102022-0515</div>
<div class="t" id="r3b" style="top:273.00px;font-size:6.15px;color:#1a1a1a;letter-spacing:-0.03px;left:289.50px;">28/10/2022 10:19 AM</div>
<div class="t" id="r3c" style="top:273.00px;font-size:6.15px;color:#1a1a1a;left:362.00px;">28/10/2022</div>
<div class="t" id="r3d" style="top:282.51px;font-size:5.55px;color:#f2453d;font-weight:bold;left:362.00px;-webkit-text-stroke:0;">1095 days overdue</div>
<div class="t" id="r3e" style="top:273.00px;font-size:6.15px;color:#1a1a1a;letter-spacing:-0.165px;left:426.20px;">[Feb/2022] Arisya Faqeera :: Pendaftaran Baru :: Course Fee - RM 100.00</div>
<div class="t" id="r3f" style="top:273.00px;font-size:6.15px;color:#1a1a1a;right:208.00px;">100.00</div>
<div class="badge" style="left:728.2px;top:273.5px;width:28px;background:#f44336">OVERDUE</div>
<div class="t" id="r3g" style="top:273.73px;font-size:5.9px;color:#b99da1;left:692.30px;width:200px;text-align:center;-webkit-text-stroke:0;">N/A</div>
<div class="btn ob" style="left:830px;top:271.8px"></div>
<div class="btn ob" style="left:848.4px;top:271.8px"></div>
<div class="btn" style="left:866.8px;top:271.8px;background:#000"></div>
<div class="btn" style="left:885.2px;top:271.8px;background:#43a047"></div>
<svg style="left:833.20px;top:274.93px" width="8.6" height="8.6" viewBox="0 0 20 20" ><path d="M1 6.5 V1 H6.5 M13.5 1 H19 V6.5 M19 13.5 V19 H13.5 M6.5 19 H1 V13.5" fill="none" stroke="rgba(0,0,0,.36)" stroke-width="1.7"/></svg>
<svg style="left:851.70px;top:274.93px" width="8.4" height="8.4" viewBox="0 0 20 20" ><g fill="none" stroke="rgba(0,0,0,.36)" stroke-width="1.7" stroke-linejoin="round"><path d="M15.5 11.5 V17 C15.5 18 15 18.5 14 18.5 H3 C2 18.5 1.5 18 1.5 17 V6 C1.5 5 2 4.5 3 4.5 H8.5"/><path d="M8 12 L18.5 1.5 M12 1.3 H18.7 V8"/></g></svg>
<svg style="left:870.20px;top:274.33px" width="7.6" height="9.6" viewBox="0 0 16 20" ><path d="M8 0.5 V13.5 M2.8 8.6 L8 13.8 L13.2 8.6" fill="none" stroke="#fff" stroke-width="2"/><path d="M1 17.8 H15" stroke="#fff" stroke-width="2"/></svg>
<svg style="left:887.80px;top:274.03px" width="9.4" height="9.4" viewBox="0 0 24 24" ><path d="M12 2 C6.5 2 2 6.5 2 12 C2 13.9 2.5 15.6 3.4 17.1 L2 22 L7.1 20.7 C8.5 21.5 10.2 22 12 22 C17.5 22 22 17.5 22 12 C22 6.5 17.5 2 12 2 Z" fill="none" stroke="#fff" stroke-width="2.2" stroke-linejoin="round"/><path d="M8.3 6.9 C7.6 7.4 7.2 8.3 7.3 9.3 C7.6 12.6 11.3 16.4 14.8 16.8 C15.8 16.9 16.7 16.4 17.2 15.6 L17.3 14.6 L14.8 13.3 L13.7 14.4 C12.2 13.8 10.4 12 9.7 10.4 L10.8 9.2 L9.5 6.8 Z" fill="#fff"/></svg>
<div class="row pink" style="top:294px;height:25px"></div>
<div class="cb" style="left:164.1px;top:301.2px"></div>
<div class="t" id="r4a" style="top:298.00px;font-size:6.15px;color:#1a1a1a;letter-spacing:-0.094px;left:192.70px;">IYB/25102022-0486</div>
<div class="t" id="r4b" style="top:298.00px;font-size:6.15px;color:#1a1a1a;letter-spacing:-0.03px;left:289.50px;">25/10/2022 12:30 PM</div>
<div class="t" id="r4c" style="top:298.00px;font-size:6.15px;color:#1a1a1a;left:362.00px;">28/10/2022</div>
<div class="t" id="r4d" style="top:307.51px;font-size:5.55px;color:#f2453d;font-weight:bold;left:362.00px;-webkit-text-stroke:0;">1095 days overdue</div>
<div class="t" id="r4e" style="top:298.00px;font-size:6.15px;color:#1a1a1a;letter-spacing:-0.165px;left:426.20px;">[Feb/2022] Arisya Faqeera :: Pendaftaran Baru :: Course Fee - RM 100.00</div>
<div class="t" id="r4f" style="top:298.00px;font-size:6.15px;color:#1a1a1a;right:208.00px;">100.00</div>
<div class="badge" style="left:728.2px;top:298.6px;width:28px;background:#f44336">OVERDUE</div>
<div class="t" id="r4g" style="top:298.73px;font-size:5.9px;color:#b99da1;left:692.30px;width:200px;text-align:center;-webkit-text-stroke:0;">N/A</div>
<div class="btn ob" style="left:830px;top:296.9px"></div>
<div class="btn ob" style="left:848.4px;top:296.9px"></div>
<div class="btn" style="left:866.8px;top:296.9px;background:#000"></div>
<div class="btn" style="left:885.2px;top:296.9px;background:#43a047"></div>
<svg style="left:833.20px;top:299.99px" width="8.6" height="8.6" viewBox="0 0 20 20" ><path d="M1 6.5 V1 H6.5 M13.5 1 H19 V6.5 M19 13.5 V19 H13.5 M6.5 19 H1 V13.5" fill="none" stroke="rgba(0,0,0,.36)" stroke-width="1.7"/></svg>
<svg style="left:851.70px;top:299.99px" width="8.4" height="8.4" viewBox="0 0 20 20" ><g fill="none" stroke="rgba(0,0,0,.36)" stroke-width="1.7" stroke-linejoin="round"><path d="M15.5 11.5 V17 C15.5 18 15 18.5 14 18.5 H3 C2 18.5 1.5 18 1.5 17 V6 C1.5 5 2 4.5 3 4.5 H8.5"/><path d="M8 12 L18.5 1.5 M12 1.3 H18.7 V8"/></g></svg>
<svg style="left:870.20px;top:299.39px" width="7.6" height="9.6" viewBox="0 0 16 20" ><path d="M8 0.5 V13.5 M2.8 8.6 L8 13.8 L13.2 8.6" fill="none" stroke="#fff" stroke-width="2"/><path d="M1 17.8 H15" stroke="#fff" stroke-width="2"/></svg>
<svg style="left:887.80px;top:299.09px" width="9.4" height="9.4" viewBox="0 0 24 24" ><path d="M12 2 C6.5 2 2 6.5 2 12 C2 13.9 2.5 15.6 3.4 17.1 L2 22 L7.1 20.7 C8.5 21.5 10.2 22 12 22 C17.5 22 22 17.5 22 12 C22 6.5 17.5 2 12 2 Z" fill="none" stroke="#fff" stroke-width="2.2" stroke-linejoin="round"/><path d="M8.3 6.9 C7.6 7.4 7.2 8.3 7.3 9.3 C7.6 12.6 11.3 16.4 14.8 16.8 C15.8 16.9 16.7 16.4 17.2 15.6 L17.3 14.6 L14.8 13.3 L13.7 14.4 C12.2 13.8 10.4 12 9.7 10.4 L10.8 9.2 L9.5 6.8 Z" fill="#fff"/></svg>
<div class="row pink" style="top:319px;height:25px"></div>
<div class="cb" style="left:164.1px;top:326.2px"></div>
<div class="t" id="r5a" style="top:323.00px;font-size:6.15px;color:#1a1a1a;letter-spacing:-0.094px;left:192.70px;">IYB/25102022-0495</div>
<div class="t" id="r5b" style="top:323.00px;font-size:6.15px;color:#1a1a1a;letter-spacing:-0.03px;left:289.50px;">25/10/2022 12:30 PM</div>
<div class="t" id="r5c" style="top:323.00px;font-size:6.15px;color:#1a1a1a;left:362.00px;">28/10/2022</div>
<div class="t" id="r5d" style="top:332.51px;font-size:5.55px;color:#f2453d;font-weight:bold;left:362.00px;-webkit-text-stroke:0;">1095 days overdue</div>
<div class="t" id="r5e" style="top:323.00px;font-size:6.15px;color:#1a1a1a;letter-spacing:-0.165px;left:426.20px;">[Mar/2022] Arisya Faqeera :: Pendaftaran Baru :: Course Fee - RM 100.00</div>
<div class="t" id="r5f" style="top:323.00px;font-size:6.15px;color:#1a1a1a;right:208.00px;">100.00</div>
<div class="badge" style="left:728.2px;top:323.6px;width:28px;background:#f44336">OVERDUE</div>
<div class="t" id="r5g" style="top:323.73px;font-size:5.9px;color:#b99da1;left:692.30px;width:200px;text-align:center;-webkit-text-stroke:0;">N/A</div>
<div class="btn ob" style="left:830px;top:321.9px"></div>
<div class="btn ob" style="left:848.4px;top:321.9px"></div>
<div class="btn" style="left:866.8px;top:321.9px;background:#000"></div>
<div class="btn" style="left:885.2px;top:321.9px;background:#43a047"></div>
<svg style="left:833.20px;top:325.05px" width="8.6" height="8.6" viewBox="0 0 20 20" ><path d="M1 6.5 V1 H6.5 M13.5 1 H19 V6.5 M19 13.5 V19 H13.5 M6.5 19 H1 V13.5" fill="none" stroke="rgba(0,0,0,.36)" stroke-width="1.7"/></svg>
<svg style="left:851.70px;top:325.05px" width="8.4" height="8.4" viewBox="0 0 20 20" ><g fill="none" stroke="rgba(0,0,0,.36)" stroke-width="1.7" stroke-linejoin="round"><path d="M15.5 11.5 V17 C15.5 18 15 18.5 14 18.5 H3 C2 18.5 1.5 18 1.5 17 V6 C1.5 5 2 4.5 3 4.5 H8.5"/><path d="M8 12 L18.5 1.5 M12 1.3 H18.7 V8"/></g></svg>
<svg style="left:870.20px;top:324.45px" width="7.6" height="9.6" viewBox="0 0 16 20" ><path d="M8 0.5 V13.5 M2.8 8.6 L8 13.8 L13.2 8.6" fill="none" stroke="#fff" stroke-width="2"/><path d="M1 17.8 H15" stroke="#fff" stroke-width="2"/></svg>
<svg style="left:887.80px;top:324.15px" width="9.4" height="9.4" viewBox="0 0 24 24" ><path d="M12 2 C6.5 2 2 6.5 2 12 C2 13.9 2.5 15.6 3.4 17.1 L2 22 L7.1 20.7 C8.5 21.5 10.2 22 12 22 C17.5 22 22 17.5 22 12 C22 6.5 17.5 2 12 2 Z" fill="none" stroke="#fff" stroke-width="2.2" stroke-linejoin="round"/><path d="M8.3 6.9 C7.6 7.4 7.2 8.3 7.3 9.3 C7.6 12.6 11.3 16.4 14.8 16.8 C15.8 16.9 16.7 16.4 17.2 15.6 L17.3 14.6 L14.8 13.3 L13.7 14.4 C12.2 13.8 10.4 12 9.7 10.4 L10.8 9.2 L9.5 6.8 Z" fill="#fff"/></svg>
<div class="row pink" style="top:344px;height:25px"></div>
<div class="cb" style="left:164.1px;top:351.3px"></div>
<div class="t" id="r6a" style="top:348.00px;font-size:6.15px;color:#1a1a1a;letter-spacing:-0.23px;left:192.70px;">6J79ZRuYpdeR7cFYcqEYSJMg</div>
<div class="t" id="r6b" style="top:348.00px;font-size:6.15px;color:#1a1a1a;letter-spacing:-0.03px;left:289.50px;">12/09/2022 11:42 AM</div>
<div class="t" id="r6c" style="top:348.00px;font-size:6.15px;color:#1a1a1a;left:362.00px;">07/11/2022</div>
<div class="t" id="r6d" style="top:357.51px;font-size:5.55px;color:#f2453d;font-weight:bold;left:362.00px;-webkit-text-stroke:0;">1085 days overdue</div>
<div class="t" id="r6e" style="top:348.00px;font-size:6.15px;color:#1a1a1a;letter-spacing:-0.165px;left:426.20px;">[Nov/2022] Arisya Faqeera :: Pendaftaran Baru :: Yuran Bulanan - RM 35.00</div>
<div class="t" id="r6f" style="top:348.00px;font-size:6.15px;color:#1a1a1a;right:208.00px;">35.00</div>
<div class="badge" style="left:728.2px;top:348.7px;width:28px;background:#f44336">OVERDUE</div>
<div class="t" id="r6g" style="top:348.73px;font-size:5.9px;color:#b99da1;left:692.30px;width:200px;text-align:center;-webkit-text-stroke:0;">N/A</div>
<div class="btn ob" style="left:830px;top:347.0px"></div>
<div class="btn ob" style="left:848.4px;top:347.0px"></div>
<div class="btn" style="left:866.8px;top:347.0px;background:#000"></div>
<div class="btn" style="left:885.2px;top:347.0px;background:#43a047"></div>
<svg style="left:833.20px;top:350.11px" width="8.6" height="8.6" viewBox="0 0 20 20" ><path d="M1 6.5 V1 H6.5 M13.5 1 H19 V6.5 M19 13.5 V19 H13.5 M6.5 19 H1 V13.5" fill="none" stroke="rgba(0,0,0,.36)" stroke-width="1.7"/></svg>
<svg style="left:851.70px;top:350.11px" width="8.4" height="8.4" viewBox="0 0 20 20" ><g fill="none" stroke="rgba(0,0,0,.36)" stroke-width="1.7" stroke-linejoin="round"><path d="M15.5 11.5 V17 C15.5 18 15 18.5 14 18.5 H3 C2 18.5 1.5 18 1.5 17 V6 C1.5 5 2 4.5 3 4.5 H8.5"/><path d="M8 12 L18.5 1.5 M12 1.3 H18.7 V8"/></g></svg>
<svg style="left:870.20px;top:349.51px" width="7.6" height="9.6" viewBox="0 0 16 20" ><path d="M8 0.5 V13.5 M2.8 8.6 L8 13.8 L13.2 8.6" fill="none" stroke="#fff" stroke-width="2"/><path d="M1 17.8 H15" stroke="#fff" stroke-width="2"/></svg>
<svg style="left:887.80px;top:349.21px" width="9.4" height="9.4" viewBox="0 0 24 24" ><path d="M12 2 C6.5 2 2 6.5 2 12 C2 13.9 2.5 15.6 3.4 17.1 L2 22 L7.1 20.7 C8.5 21.5 10.2 22 12 22 C17.5 22 22 17.5 22 12 C22 6.5 17.5 2 12 2 Z" fill="none" stroke="#fff" stroke-width="2.2" stroke-linejoin="round"/><path d="M8.3 6.9 C7.6 7.4 7.2 8.3 7.3 9.3 C7.6 12.6 11.3 16.4 14.8 16.8 C15.8 16.9 16.7 16.4 17.2 15.6 L17.3 14.6 L14.8 13.3 L13.7 14.4 C12.2 13.8 10.4 12 9.7 10.4 L10.8 9.2 L9.5 6.8 Z" fill="#fff"/></svg>
<div class="row" style="top:369px;height:25px"></div>
<div class="cb" style="left:164.1px;top:376.4px"></div>
<div class="t" id="r7a" style="top:373.00px;font-size:6.15px;color:#1a1a1a;letter-spacing:-0.094px;left:192.70px;">IMB/27092022-0380</div>
<div class="t" id="r7b" style="top:373.00px;font-size:6.15px;color:#1a1a1a;letter-spacing:-0.03px;left:289.50px;">27/09/2022 10:17 PM</div>
<div class="t" id="r7c" style="top:373.00px;font-size:6.15px;color:#1a1a1a;left:362.00px;">09/11/2022</div>
<div class="t" id="r7e" style="top:373.00px;font-size:6.15px;color:#1a1a1a;letter-spacing:-0.165px;left:426.20px;">[Nov/2022] Arisya Faqeera :: Pendaftaran Baru :: Yuran Bulanan - RM 35.00</div>
<div class="t" id="r7f" style="top:373.00px;font-size:6.15px;color:#1a1a1a;right:208.00px;">35.00</div>
<div class="badge" style="left:733.4px;top:373.8px;width:18px;background:#4caf50">PAID</div>
<div class="t" id="r7g" style="top:373.73px;font-size:5.9px;color:#b4b4b4;left:692.30px;width:200px;text-align:center;-webkit-text-stroke:0;">N/A</div>
<div class="btn ob" style="left:830px;top:372.1px"></div>
<div class="btn ob" style="left:848.4px;top:372.1px"></div>
<div class="btn" style="left:866.8px;top:372.1px;background:#000"></div>
<div class="btn" style="left:885.2px;top:372.1px;background:#43a047"></div>
<svg style="left:833.20px;top:375.17px" width="8.6" height="8.6" viewBox="0 0 20 20" ><path d="M1 6.5 V1 H6.5 M13.5 1 H19 V6.5 M19 13.5 V19 H13.5 M6.5 19 H1 V13.5" fill="none" stroke="rgba(0,0,0,.36)" stroke-width="1.7"/></svg>
<svg style="left:851.70px;top:375.17px" width="8.4" height="8.4" viewBox="0 0 20 20" ><g fill="none" stroke="rgba(0,0,0,.36)" stroke-width="1.7" stroke-linejoin="round"><path d="M15.5 11.5 V17 C15.5 18 15 18.5 14 18.5 H3 C2 18.5 1.5 18 1.5 17 V6 C1.5 5 2 4.5 3 4.5 H8.5"/><path d="M8 12 L18.5 1.5 M12 1.3 H18.7 V8"/></g></svg>
<svg style="left:870.20px;top:374.57px" width="7.6" height="9.6" viewBox="0 0 16 20" ><path d="M8 0.5 V13.5 M2.8 8.6 L8 13.8 L13.2 8.6" fill="none" stroke="#fff" stroke-width="2"/><path d="M1 17.8 H15" stroke="#fff" stroke-width="2"/></svg>
<svg style="left:887.80px;top:374.27px" width="9.4" height="9.4" viewBox="0 0 24 24" ><path d="M12 2 C6.5 2 2 6.5 2 12 C2 13.9 2.5 15.6 3.4 17.1 L2 22 L7.1 20.7 C8.5 21.5 10.2 22 12 22 C17.5 22 22 17.5 22 12 C22 6.5 17.5 2 12 2 Z" fill="none" stroke="#fff" stroke-width="2.2" stroke-linejoin="round"/><path d="M8.3 6.9 C7.6 7.4 7.2 8.3 7.3 9.3 C7.6 12.6 11.3 16.4 14.8 16.8 C15.8 16.9 16.7 16.4 17.2 15.6 L17.3 14.6 L14.8 13.3 L13.7 14.4 C12.2 13.8 10.4 12 9.7 10.4 L10.8 9.2 L9.5 6.8 Z" fill="#fff"/></svg>
<div class="row pink" style="top:394px;height:25px"></div>
<div class="cb" style="left:164.1px;top:401.4px"></div>
<div class="t" id="r8a" style="top:398.00px;font-size:6.15px;color:#1a1a1a;letter-spacing:-0.094px;left:192.70px;">IYB/15112022-0559</div>
<div class="t" id="r8b" style="top:398.00px;font-size:6.15px;color:#1a1a1a;letter-spacing:-0.03px;left:289.50px;">15/11/2022 10:17 AM</div>
<div class="t" id="r8c" style="top:398.00px;font-size:6.15px;color:#1a1a1a;left:362.00px;">28/11/2022</div>
<div class="t" id="r8d" style="top:407.51px;font-size:5.55px;color:#f2453d;font-weight:bold;left:362.00px;-webkit-text-stroke:0;">1064 days overdue</div>
<div class="t" id="r8e" style="top:398.00px;font-size:6.15px;color:#1a1a1a;letter-spacing:-0.165px;left:426.20px;">[Jan/2022] Abdul Mateen :: F522 (P5) :: Yuran Bulanan (Anak ke-3) - RM 60.00</div>
<div class="t" id="r8f" style="top:398.00px;font-size:6.15px;color:#1a1a1a;right:208.00px;">60.00</div>
<div class="badge" style="left:728.2px;top:398.8px;width:28px;background:#f44336">OVERDUE</div>
<div class="t" id="r8g" style="top:398.73px;font-size:5.9px;color:#b99da1;left:692.30px;width:200px;text-align:center;-webkit-text-stroke:0;">N/A</div>
<div class="btn ob" style="left:830px;top:397.1px"></div>
<div class="btn ob" style="left:848.4px;top:397.1px"></div>
<div class="btn" style="left:866.8px;top:397.1px;background:#000"></div>
<div class="btn" style="left:885.2px;top:397.1px;background:#43a047"></div>
<svg style="left:833.20px;top:400.23px" width="8.6" height="8.6" viewBox="0 0 20 20" ><path d="M1 6.5 V1 H6.5 M13.5 1 H19 V6.5 M19 13.5 V19 H13.5 M6.5 19 H1 V13.5" fill="none" stroke="rgba(0,0,0,.36)" stroke-width="1.7"/></svg>
<svg style="left:851.70px;top:400.23px" width="8.4" height="8.4" viewBox="0 0 20 20" ><g fill="none" stroke="rgba(0,0,0,.36)" stroke-width="1.7" stroke-linejoin="round"><path d="M15.5 11.5 V17 C15.5 18 15 18.5 14 18.5 H3 C2 18.5 1.5 18 1.5 17 V6 C1.5 5 2 4.5 3 4.5 H8.5"/><path d="M8 12 L18.5 1.5 M12 1.3 H18.7 V8"/></g></svg>
<svg style="left:870.20px;top:399.63px" width="7.6" height="9.6" viewBox="0 0 16 20" ><path d="M8 0.5 V13.5 M2.8 8.6 L8 13.8 L13.2 8.6" fill="none" stroke="#fff" stroke-width="2"/><path d="M1 17.8 H15" stroke="#fff" stroke-width="2"/></svg>
<svg style="left:887.80px;top:399.33px" width="9.4" height="9.4" viewBox="0 0 24 24" ><path d="M12 2 C6.5 2 2 6.5 2 12 C2 13.9 2.5 15.6 3.4 17.1 L2 22 L7.1 20.7 C8.5 21.5 10.2 22 12 22 C17.5 22 22 17.5 22 12 C22 6.5 17.5 2 12 2 Z" fill="none" stroke="#fff" stroke-width="2.2" stroke-linejoin="round"/><path d="M8.3 6.9 C7.6 7.4 7.2 8.3 7.3 9.3 C7.6 12.6 11.3 16.4 14.8 16.8 C15.8 16.9 16.7 16.4 17.2 15.6 L17.3 14.6 L14.8 13.3 L13.7 14.4 C12.2 13.8 10.4 12 9.7 10.4 L10.8 9.2 L9.5 6.8 Z" fill="#fff"/></svg>
<div class="row" style="top:419px;height:25px"></div>
<div class="cb" style="left:164.1px;top:426.5px"></div>
<div class="t" id="r9a" style="top:423.00px;font-size:6.15px;color:#1a1a1a;letter-spacing:-0.094px;left:192.70px;">IAB</div>
<div class="t" id="r9b" style="top:423.00px;font-size:6.15px;color:#1a1a1a;letter-spacing:-0.03px;left:289.50px;">12/09/2022 11:42 AM</div>
<div class="t" id="r9c" style="top:423.00px;font-size:6.15px;color:#1a1a1a;left:362.00px;">07/12/2022</div>
<div class="t" id="r9e" style="top:423.00px;font-size:6.15px;color:#1a1a1a;letter-spacing:-0.165px;left:426.20px;">[Dec/2022] Arisya Faqeera :: Pendaftaran Baru :: Yuran Bulanan - RM 35.00</div>
<div class="t" id="r9f" style="top:423.00px;font-size:6.15px;color:#1a1a1a;right:208.00px;">35.00</div>
<div class="badge" style="left:733.4px;top:423.9px;width:18px;background:#4caf50">PAID</div>
<div class="t" id="r9g" style="top:423.73px;font-size:5.9px;color:#b4b4b4;left:692.30px;width:200px;text-align:center;-webkit-text-stroke:0;">N/A</div>
<div class="btn ob" style="left:830px;top:422.2px"></div>
<div class="btn ob" style="left:848.4px;top:422.2px"></div>
<div class="btn" style="left:866.8px;top:422.2px;background:#000"></div>
<div class="btn" style="left:885.2px;top:422.2px;background:#43a047"></div>
<svg style="left:833.20px;top:425.29px" width="8.6" height="8.6" viewBox="0 0 20 20" ><path d="M1 6.5 V1 H6.5 M13.5 1 H19 V6.5 M19 13.5 V19 H13.5 M6.5 19 H1 V13.5" fill="none" stroke="rgba(0,0,0,.36)" stroke-width="1.7"/></svg>
<svg style="left:851.70px;top:425.29px" width="8.4" height="8.4" viewBox="0 0 20 20" ><g fill="none" stroke="rgba(0,0,0,.36)" stroke-width="1.7" stroke-linejoin="round"><path d="M15.5 11.5 V17 C15.5 18 15 18.5 14 18.5 H3 C2 18.5 1.5 18 1.5 17 V6 C1.5 5 2 4.5 3 4.5 H8.5"/><path d="M8 12 L18.5 1.5 M12 1.3 H18.7 V8"/></g></svg>
<svg style="left:870.20px;top:424.69px" width="7.6" height="9.6" viewBox="0 0 16 20" ><path d="M8 0.5 V13.5 M2.8 8.6 L8 13.8 L13.2 8.6" fill="none" stroke="#fff" stroke-width="2"/><path d="M1 17.8 H15" stroke="#fff" stroke-width="2"/></svg>
<svg style="left:887.80px;top:424.39px" width="9.4" height="9.4" viewBox="0 0 24 24" ><path d="M12 2 C6.5 2 2 6.5 2 12 C2 13.9 2.5 15.6 3.4 17.1 L2 22 L7.1 20.7 C8.5 21.5 10.2 22 12 22 C17.5 22 22 17.5 22 12 C22 6.5 17.5 2 12 2 Z" fill="none" stroke="#fff" stroke-width="2.2" stroke-linejoin="round"/><path d="M8.3 6.9 C7.6 7.4 7.2 8.3 7.3 9.3 C7.6 12.6 11.3 16.4 14.8 16.8 C15.8 16.9 16.7 16.4 17.2 15.6 L17.3 14.6 L14.8 13.3 L13.7 14.4 C12.2 13.8 10.4 12 9.7 10.4 L10.8 9.2 L9.5 6.8 Z" fill="#fff"/></svg>
<div class="abs" style="left:152.7px;top:444px;width:754.1px;height:.6px;background:#e6e6e6"></div>
<div class="t" id="pg1" style="top:452.72px;font-size:5.35px;color:#222;left:724.50px;">Records per page:</div>
<div class="t" id="pg2" style="top:451.58px;font-size:6.2px;color:#222;left:776.30px;">10</div>
<div class="t" id="pg3" style="top:452.69px;font-size:5.4px;color:#222;left:804.30px;">1-10 of 313</div>
<svg style="left:789.00px;top:453.80px" width="4.6" height="2.4" viewBox="0 0 10 5" ><path d="M0 0 H10 L5 5 Z" fill="#555"/></svg>
<svg style="left:843.40px;top:451.30px" width="6.6" height="6.6" viewBox="0 0 14 14" ><path d="M1.5 1 V13 M12 1.5 L6 7 L12 12.5" fill="none" stroke="#333" stroke-width="2.1"/></svg>
<svg style="left:860.00px;top:451.30px" width="4" height="6.6" viewBox="0 0 8.5 14" ><path d="M7 1.5 L1.5 7 L7 12.5" fill="none" stroke="#333" stroke-width="2.1"/></svg>
<svg style="left:875.50px;top:451.30px" width="4" height="6.6" viewBox="0 0 8.5 14" ><path d="M1.5 1.5 L7 7 L1.5 12.5" fill="none" stroke="#333" stroke-width="2.1"/></svg>
<svg style="left:889.40px;top:451.30px" width="6.6" height="6.6" viewBox="0 0 14 14" ><path d="M12.5 1 V13 M2 1.5 L8 7 L2 12.5" fill="none" stroke="#333" stroke-width="2.1"/></svg>
<svg id="anno" style="left:0;top:0" width="920" height="488" viewBox="0 0 920 488">
<rect x="844.5" y="192.4" width="22.5" height="21.3" fill="none" stroke="#e3171b" stroke-width="1.6"/>
<line x1="843.9" y1="153.2" x2="851.2" y2="182" stroke="#e3171b" stroke-width="1.3" stroke-linecap="round"/>
<path d="M852.5 187.4 L846 180.6 L854.5 178.2 Z" fill="#e3171b"/>
</svg>
</body></html>
